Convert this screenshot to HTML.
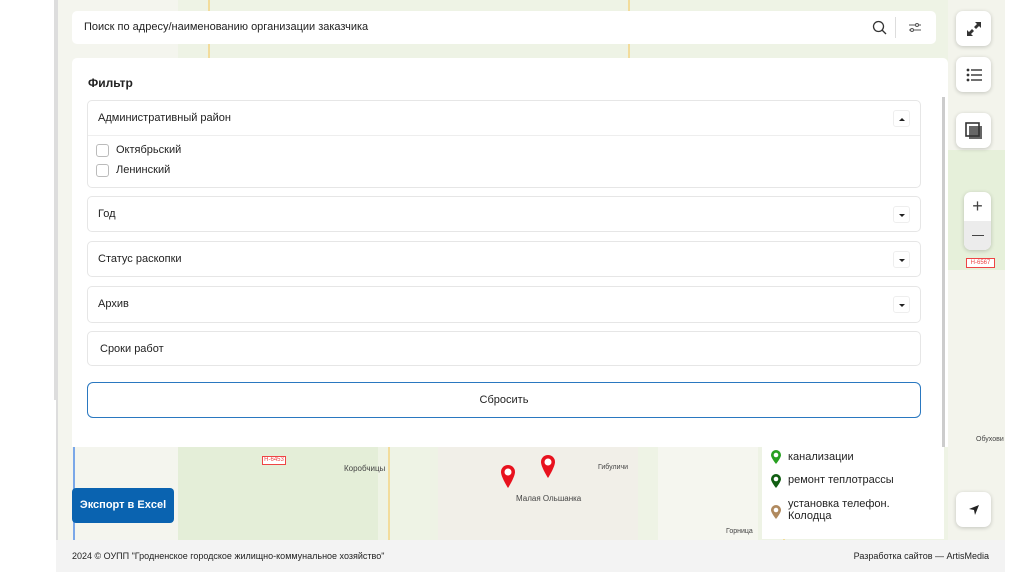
<!DOCTYPE html>
<html><head><meta charset="utf-8"><style>
*{box-sizing:border-box;margin:0;padding:0}
body{width:1024px;height:572px;overflow:hidden;background:#fff;font-family:"Liberation Sans",sans-serif;color:#222;position:relative}
.map{position:absolute;left:56px;top:0;width:949px;height:540px;background:#eef3e5;overflow:hidden;border-left:2px solid #ddd}
.ab{position:absolute}
.card{position:absolute;background:#fff;border-radius:5px}
.btn{position:absolute;background:#fff;border-radius:7px;box-shadow:0 1px 4px rgba(0,0,0,.2);width:35px;height:35px;display:flex;align-items:center;justify-content:center}
.acc{position:absolute;left:15px;width:834px;border:1px solid #e6e6e6;border-radius:5px;font-size:11px}
.acc .h{height:35px;line-height:35px;padding-left:10px;position:relative}
.car{position:absolute;right:10px;top:9px;width:17px;height:17px;border:1px solid #eee;border-radius:3px;background:#fff}
.car:after{content:"";position:absolute;left:5px;top:7px;border-left:3px solid transparent;border-right:3px solid transparent;border-top:3px solid #222}
.car.up:after{border-top:none;border-bottom:3px solid #222}
.cb{display:flex;align-items:center;font-size:11px;height:20px;padding-left:8px}
.cb i{width:13px;height:13px;border:1px solid #bbb;border-radius:3px;margin-right:7px;display:inline-block}
.lg{font-size:11px;display:flex;align-items:flex-start;margin-bottom:8px}
</style></head><body>
<div class="map">
<div class="ab" style="left:0;top:0;width:120px;height:540px;background:#f4f5ee"></div>
<div class="ab" style="left:120px;top:440px;width:200px;height:100px;background:#e4eed8"></div>
<div class="ab" style="left:380px;top:440px;width:200px;height:100px;background:#f1efe8"></div>
<div class="ab" style="left:600px;top:440px;width:100px;height:100px;background:#f5f6ef"></div>
<div class="ab" style="left:890px;top:0;width:59px;height:540px;background:#f3f4ec"></div>
<div class="ab" style="left:890px;top:150px;width:59px;height:120px;background:#e6f0da"></div>
<div class="ab" style="left:15px;top:150px;width:2px;height:390px;background:#7aa7e8"></div>
<div class="ab" style="left:330px;top:440px;width:2px;height:100px;background:#f2dc9c"></div>
<div class="ab" style="left:150px;top:0;width:2px;height:60px;background:#f2dc9c"></div>
<div class="ab" style="left:570px;top:0;width:2px;height:60px;background:#f2dc9c"></div>
<div class="ab" style="left:725px;top:448px;width:2px;height:92px;background:#f2dc9c"></div>
<div class="ab" style="left:908px;top:258px;width:29px;height:10px;border:1px solid #e44;background:#fff;font-size:6px;color:#e44;text-align:center;line-height:8px">Н-6567</div>
<div class="ab" style="left:204px;top:456px;width:24px;height:9px;border:1px solid #e44;background:#fff;font-size:6px;color:#e44;text-align:center;line-height:7px">Н-6453</div>
<div class="ab" style="left:286px;top:464px;font-size:8px;color:#444">Коробчицы</div>
<div class="ab" style="left:458px;top:494px;font-size:8px;color:#444">Малая Ольшанка</div>
<div class="ab" style="left:540px;top:464px;font-size:7px;color:#444">Гибуличи</div>
<div class="ab" style="left:918px;top:436px;font-size:7px;color:#444">Обухови</div>
<div class="ab" style="left:668px;top:528px;font-size:7px;color:#444">Горница</div>
<svg class="ab" style="left:442px;top:464px" width="16" height="26"><path d="M8 1a7 7 0 0 1 7 7c0 5-7 16-7 16S1 13 1 8a7 7 0 0 1 7-7z" fill="#e8121e"/><circle cx="8" cy="8" r="3.5" fill="#fff"/></svg>
<svg class="ab" style="left:482px;top:454px" width="16" height="26"><path d="M8 1a7 7 0 0 1 7 7c0 5-7 16-7 16S1 13 1 8a7 7 0 0 1 7-7z" fill="#e8121e"/><circle cx="8" cy="8" r="3.5" fill="#fff"/></svg>
</div>
<div class="card" style="left:72px;top:11px;width:864px;height:33px;font-size:11px;line-height:33px;padding-left:12px">Поиск по адресу/наименованию организации заказчика
<svg class="ab" style="left:800px;top:9px" width="15" height="15" fill="none" stroke="#333" stroke-width="1.3"><circle cx="6.5" cy="6.5" r="5"/><path d="M10 10l4 4"/></svg>
<div class="ab" style="left:823px;top:6px;width:1px;height:21px;background:#ddd"></div>
<svg class="ab" style="left:836px;top:10px" width="14" height="13" fill="none" stroke="#555" stroke-width="1"><path d="M1 4h12M1 9h12"/><circle cx="9" cy="4" r="1.5" fill="#fff"/><circle cx="4" cy="9" r="1.5" fill="#fff"/></svg>
</div>
<div class="btn" style="left:956px;top:11px"><svg width="16" height="16" fill="#333"><path d="M9 1h6v6l-2-2-3 3-2-2 3-3zM7 15H1V9l2 2 3-3 2 2-3 3z"/></svg></div>
<div class="btn" style="left:956px;top:57px"><svg width="16" height="14" fill="#333"><circle cx="2" cy="2" r="1.4"/><circle cx="2" cy="7" r="1.4"/><circle cx="2" cy="12" r="1.4"/><rect x="5" y="1.3" width="11" height="1.4"/><rect x="5" y="6.3" width="11" height="1.4"/><rect x="5" y="11.3" width="11" height="1.4"/></svg></div>
<div class="btn" style="left:956px;top:113px"><svg width="20" height="20"><rect x="5" y="5" width="13" height="13" fill="#666"/><rect x="2" y="2" width="13" height="13" fill="none" stroke="#333" stroke-width="1.6"/></svg></div>
<div class="btn" style="left:964px;top:192px;width:27px;height:58px;flex-direction:column;overflow:hidden"><div style="height:29px;width:27px;text-align:center;font-size:18px;line-height:29px;color:#444">+</div><div style="height:29px;width:27px;background:#ececec;display:flex;align-items:center;justify-content:center"><div style="width:12px;height:1.5px;background:#444"></div></div></div>
<div class="btn" style="left:956px;top:492px"><svg width="12" height="12"><path d="M11 1L1 5l5 1 1 5z" fill="#222"/></svg></div>
<div class="card" style="left:72px;top:58px;width:876px;height:389px;border-radius:5px 5px 0 0">
<div class="ab" style="left:16px;top:18px;font-size:12px;font-weight:bold">Фильтр</div>
<div class="acc" style="top:42px;height:88px"><div class="h" style="border-bottom:1px solid #eee">Административный район<div class="car up"></div></div>
<div style="padding-top:4px"><div class="cb"><i></i>Октябрьский</div><div class="cb"><i></i>Ленинский</div></div></div>
<div class="acc" style="top:138px;height:36px"><div class="h">Год<div class="car"></div></div></div>
<div class="acc" style="top:183px;height:36px"><div class="h">Статус раскопки<div class="car"></div></div></div>
<div class="acc" style="top:228px;height:37px"><div class="h">Архив<div class="car"></div></div></div>
<div class="acc" style="top:273px;height:35px"><div class="h" style="padding-left:12px">Сроки работ</div></div>
<div class="ab" style="left:15px;top:324px;width:834px;height:36px;border:1px solid #2a78c0;border-radius:6px;text-align:center;line-height:34px;font-size:11px">Сбросить</div>
<div class="ab" style="left:870px;top:39px;width:3px;height:350px;background:#ccc"></div>
</div>
<div class="card" style="left:762px;top:447px;width:182px;height:92px;border-radius:0;padding:2px 0 0 8px;overflow:hidden">
<div class="lg"><svg width="12" height="16" style="margin-right:6px"><path d="M6 1a5 5 0 0 1 5 5c0 3-5 9-5 9S1 9 1 6a5 5 0 0 1 5-5z" fill="#27a020"/><circle cx="6" cy="6" r="2.3" fill="#fff"/></svg><span style="margin-top:2px">канализации</span></div>
<div class="lg" style="margin-top:7px"><svg width="12" height="16" style="margin-right:6px"><path d="M6 1a5 5 0 0 1 5 5c0 3-5 9-5 9S1 9 1 6a5 5 0 0 1 5-5z" fill="#115e12"/><circle cx="6" cy="6" r="2.3" fill="#fff"/></svg><span style="margin-top:1px">ремонт теплотрассы</span></div>
<div class="lg" style="margin-top:9px"><svg width="12" height="16" style="margin-right:6px;margin-top:6px"><path d="M6 1a5 5 0 0 1 5 5c0 3-5 9-5 9S1 9 1 6a5 5 0 0 1 5-5z" fill="#b08a5f"/><circle cx="6" cy="6" r="2.3" fill="#fff"/></svg><span>установка телефон.<br>Колодца</span></div>
</div>
<div class="ab" style="left:72px;top:488px;width:102px;height:35px;background:#0a63b0;border-radius:4px;color:#fff;font-size:11px;font-weight:bold;text-align:center;line-height:35px">Экспорт в Excel</div>
<div class="ab" style="left:56px;top:540px;width:949px;height:32px;background:#f3f3f3;font-size:9px;line-height:32px;padding:0 16px;display:flex;justify-content:space-between"><span>2024 © ОУПП "Гродненское городское жилищно-коммунальное хозяйство"</span><span>Разработка сайтов — ArtisMedia</span></div>
<div class="ab" style="left:54px;top:0;width:2px;height:400px;background:#ddd"></div>
</body></html>
